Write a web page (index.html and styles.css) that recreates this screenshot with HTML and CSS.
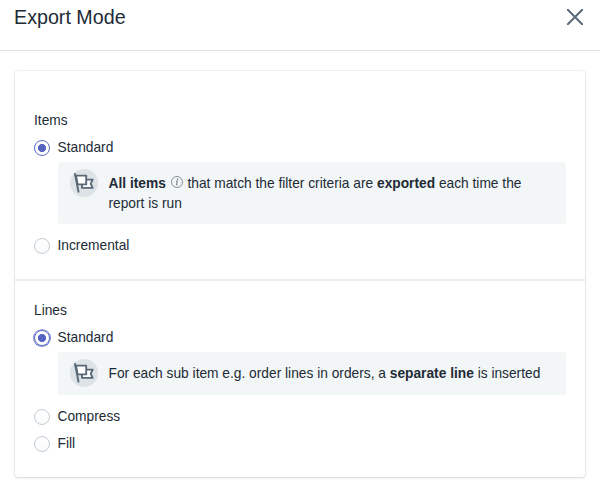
FILE: index.html
```html
<!DOCTYPE html>
<html lang="en">
<head>
<meta charset="utf-8">
<title>Export Mode</title>
<link rel="stylesheet" href="styles.css">
</head>
<body>
<svg class="defs" aria-hidden="true">
  <symbol id="flag" viewBox="0 0 28 28">
    <path d="M16 10.6h6.7l-2 4.1 2 4.2H12v-4" fill="#fff" stroke="#5a6977" stroke-width="1.9" stroke-linejoin="round"/>
    <path d="M6 6.6h10.2v8.8H7.6z" fill="#fff" stroke="#5a6977" stroke-width="1.9" stroke-linejoin="round"/>
    <path d="M5 5 8.5 22.8" fill="none" stroke="#5a6977" stroke-width="1.9" stroke-linecap="round"/>
  </symbol>
</svg>
<header class="header">
  <h1 class="title">Export Mode</h1>
  <button class="close" aria-label="Close">
    <svg viewBox="0 0 16 16" width="16" height="16"><path d="M.8.8l14.4 14.4M15.2.8.8 15.2" stroke="#5b6976" stroke-width="2" stroke-linecap="round"/></svg>
  </button>
</header>
<main class="card">
  <section class="section section-items">
    <h2 class="heading">Items</h2>
    <div class="choice"><span class="radio checked"></span><span class="label">Standard</span></div>
    <div class="note">
      <span class="badge"><svg width="28" height="28"><use href="#flag"/></svg></span>
      <p class="text"><b>All items</b> <svg class="info" viewBox="0 0 12 12" width="12" height="12"><circle cx="6" cy="6" r="5.5" fill="none" stroke="#79848d" stroke-width=".9"/><path d="M5 5.1h1.3L5.5 8.8h1" fill="none" stroke="#59656f" stroke-width=".9"/><circle cx="6.6" cy="3.2" r=".7" fill="#59656f"/></svg> that match the filter criteria are <b>exported</b> each time the report is run</p>
    </div>
    <div class="choice"><span class="radio"></span><span class="label">Incremental</span></div>
  </section>
  <section class="section section-lines">
    <h2 class="heading">Lines</h2>
    <div class="choice"><span class="radio checked focused"></span><span class="label">Standard</span></div>
    <div class="note">
      <span class="badge"><svg width="28" height="28"><use href="#flag"/></svg></span>
      <p class="text">For each sub item e.g. order lines in orders, a <b>separate line</b> is inserted</p>
    </div>
    <div class="choice"><span class="radio"></span><span class="label">Compress</span></div>
    <div class="choice"><span class="radio"></span><span class="label">Fill</span></div>
  </section>
</main>
</body>
</html>
```
FILE: styles.css
```css
* { box-sizing: border-box; }
body {
  min-height: 494px;
  margin: 0;
  background: #fff;
  color: #212b36;
  font: 13.76px/20px "Liberation Sans", Arial, sans-serif;
}
.defs { position: absolute; width: 0; height: 0; }
.header {
  display: flex;
  justify-content: space-between;
  align-items: flex-start;
  height: 51px;
  padding: 3px 17px 0 14px;
  border-bottom: 1px solid #d9e4e3;
}
.title { margin: 0; font-size: 19.7px; line-height: 28px; font-weight: 400; }
.close { display: flex; margin: 6px 0 0; padding: 0; border: 0; background: none; }
.card {
  height: 406px;
  margin: 20px 15px 0;
  border-radius: 3px;
  background: #fff;
  box-shadow: 0 0 0 1px rgba(63, 63, 68, .06), 0 1px 3px rgba(63, 63, 68, .16);
}
.section { padding: 0 19px; }
.section-items { height: 210px; padding-top: 40px; border-bottom: 2px solid #e8eeee; }
.section-lines { padding-top: 20px; }
.heading { margin: 0 0 3px; font-size: inherit; line-height: 20px; font-weight: 400; }
.choice { display: flex; align-items: center; gap: 7.5px; height: 27px; }
.label { padding-top: 1px; }
.radio {
  width: 16px;
  height: 16px;
  border: 1px solid #c4cdd5;
  border-radius: 50%;
  background: linear-gradient(#fff, #f9fafb);
}
.radio.checked {
  border-color: #5c6ac4;
  background: radial-gradient(circle, #5563c1 3.7px, #fff 4.4px);
}
.radio.focused { border-width: 1.5px; box-shadow: 0 0 0 .8px #5c6ac4; }
.note {
  display: flex;
  align-items: flex-start;
  gap: 11px;
  margin: .5px 0 8px 24px;
  padding: 7.5px 20px 8px 12px;
  border-radius: 3px;
  background: #f2f6f7;
}
.section-items .note { height: 62.5px; }
.section-lines .note { height: 43.5px; }
.badge { flex: none; width: 28px; height: 28px; margin-left: -.5px; border-radius: 50%; background: #dde3e7; }
.badge svg { display: block; }
.text { margin: 5px 0 0; line-height: 19.5px; }
.info { margin: 0 1px; vertical-align: 0; }
```
